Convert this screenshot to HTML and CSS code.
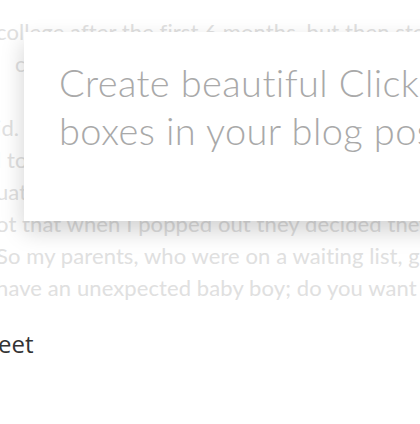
FILE: index.html
```
<!DOCTYPE html>
<html lang="en">
<head>
    <meta charset="UTF-8">
    <title>Click to Tweet</title>
    <link rel="stylesheet" href="styles.css">
</head>
<body>
    <div class="stage">
        <div class="story">
            <div class="line">college after the first 6 months, but then stopped</div>
            <div class="line indent">c</div>
            <div class="line"></div>
            <div class="line">id.</div>
            <div class="line">l to</div>
            <div class="line">uat</div>
            <div class="line">ot that when I popped out they decided they</div>
            <div class="line">So my parents, who were on a waiting list, got</div>
            <div class="line">have an unexpected baby boy; do you want</div>
        </div>

        <div class="promo">
            <p>Create beautiful Click to Tweet<br>boxes in your blog posts</p>
        </div>

        <div class="tweet">eet</div>
    </div>
</body>
</html>
```

FILE: styles.css
```
body {
    margin: 0;
    padding: 0;
    background-color: #fff;
    overflow: hidden;
}

.stage {
    position: relative;
    width: 420px;
    height: 424px;
    overflow: hidden;
}

.story {
    margin-left: -4px;
    padding-top: 16px;
    font-family: Lato, "Open Sans", sans-serif;
    font-size: 22px;
    line-height: 32px;
    letter-spacing: 0.1px;
    color: #e0e0e0;
    white-space: nowrap;
}

.line {
    height: 32px;
}

.indent {
    padding-left: 19px;
}

.promo {
    position: absolute;
    left: 24px;
    top: 32px;
    width: 500px;
    height: 189px;
    background-color: #fff;
    box-shadow: 0 10px 22px rgba(0, 0, 0, 0.18);
}

.promo p {
    margin: 0;
    padding: 26px 0 0 35px;
    font-family: Lato, sans-serif;
    font-weight: 300;
    font-size: 38px;
    line-height: 48px;
    letter-spacing: 0.4px;
    font-variant-ligatures: none;
    color: #a9a9a9;
    white-space: nowrap;
}

.tweet {
    margin-top: 23px;
    margin-left: -2px;
    font-family: "Open Sans", sans-serif;
    font-size: 24px;
    color: #333;
}
```
